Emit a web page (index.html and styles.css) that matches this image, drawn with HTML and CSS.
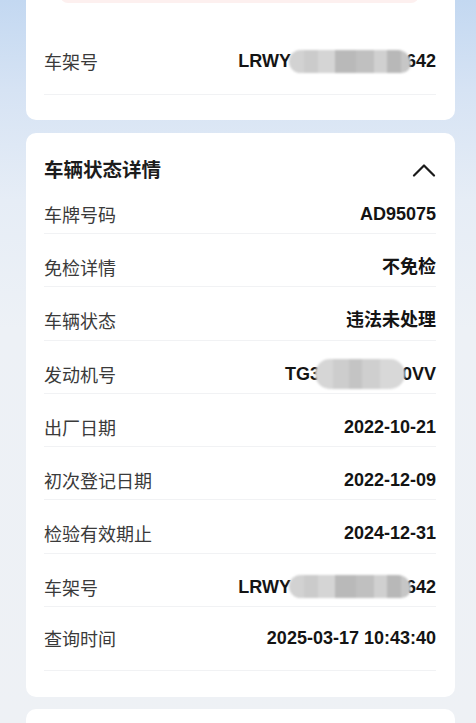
FILE: index.html
```html
<!DOCTYPE html>
<html lang="zh-CN">
<head>
<meta charset="utf-8">
<title>车辆状态详情</title>
<link rel="stylesheet" href="styles.css">
</head>
<body>
<div class="page">
  <section class="card card-top">
    <div class="alert"></div>
    <div class="row row-solo">
      <span class="label">车架号</span>
      <span class="value"><span>LRWY</span><span class="mask mask-vin"></span><span>642</span></span>
    </div>
  </section>

  <section class="card card-detail">
    <header class="card-head">
      <h2 class="title">车辆状态详情</h2>
      <svg class="chevron" width="24" height="14" viewBox="0 0 24 14" aria-hidden="true">
        <polyline points="2,12.5 12,2.5 22,12.5" fill="none" stroke="#1a1a1a" stroke-width="2.2" stroke-linecap="round" stroke-linejoin="round"/>
      </svg>
    </header>
    <div class="row row-first"><span class="label">车牌号码</span><span class="value">AD95075</span></div>
    <div class="row"><span class="label">免检详情</span><span class="value">不免检</span></div>
    <div class="row"><span class="label">车辆状态</span><span class="value">违法未处理</span></div>
    <div class="row"><span class="label">发动机号</span><span class="value"><span>TG3</span><span class="mask mask-engine"></span><span>0VV</span></span></div>
    <div class="row"><span class="label">出厂日期</span><span class="value">2022-10-21</span></div>
    <div class="row"><span class="label">初次登记日期</span><span class="value">2022-12-09</span></div>
    <div class="row"><span class="label">检验有效期止</span><span class="value">2024-12-31</span></div>
    <div class="row"><span class="label">车架号</span><span class="value"><span>LRWY</span><span class="mask mask-vin"></span><span>642</span></span></div>
    <div class="row row-last"><span class="label">查询时间</span><span class="value">2025-03-17 10:43:40</span></div>
  </section>

  <section class="card card-next"></section>
</div>
</body>
</html>
```

FILE: styles.css
```css
html, body {
  margin: 0;
  padding: 0;
}
body {
  height: 723px;
  overflow: hidden;
  font-family: "Noto Sans CJK SC", "Noto Sans", sans-serif;
  background:
    linear-gradient(180deg, #c3d8f1 0px, #d6e3f4 90px, #e6edf6 200px, #edf1f6 330px, #eef1f5 723px);
}
.page {
  padding: 0 21px 0 26px;
}
.card {
  background: #ffffff;
  border-radius: 10px;
  padding: 0 19px 0 18px;
}
.card-top {
  margin-top: -40px;
  padding-top: 13px;
  padding-bottom: 25px;
}
.alert {
  height: 30px;
  margin: 0 17px 0 16px;
  background: #fdf0ef;
  border-radius: 0 0 8px 8px;
}
.row {
  display: flex;
  justify-content: space-between;
  align-items: center;
  height: 22px;
  padding: 22px 0 8.3px;
  line-height: 22px;
  border-bottom: 1px solid #f1f2f4;
}
.row-solo {
  padding: 47px 0 22px;
}
.card-detail {
  margin-top: 13px;
  padding-bottom: 26px;
}
.card-head {
  display: flex;
  justify-content: space-between;
  align-items: center;
  padding-top: 24px;
}
.title {
  margin: 0;
  font-size: 19.5px;
  line-height: 24px;
  font-weight: 700;
  color: #1c1c1c;
}
.chevron {
  display: block;
  margin-top: 2px;
}
.row-first {
  padding-top: 22px;
  padding-bottom: 8px;
}
.row-last {
  padding: 20px 0 21px;
}
.label {
  font-size: 18px;
  color: #3a3a3a;
  font-weight: 400;
}
.value {
  display: flex;
  align-items: center;
  height: 22px;
  font-family: "Liberation Sans", "Noto Sans CJK SC", sans-serif;
  font-size: 18px;
  font-weight: 700;
  color: #141414;
}
.mask {
  position: relative;
  z-index: 1;
  display: block;
  flex: none;
  filter: blur(1.2px);
}
.mask-vin {
  width: 122px;
  height: 23px;
  margin: -1px -5px -1px -2px;
  border-radius: 12px 14px 10px 12px;
  background: linear-gradient(90deg,
    #d2d2d2 0 12%, #cbcbcb 12% 24%, #d5d5d5 24% 38%,
    #b9b9b9 38% 55%, #c0c0c0 55% 70%, #d0d0d0 70% 80%,
    #b8b8b8 80% 92%, #c6c6c6 92% 100%);
}
.mask-engine {
  width: 90px;
  height: 30px;
  margin: -4px -3px -4px -5px;
  border-radius: 15px;
  background: linear-gradient(90deg,
    #d6d6d6 0 20%, #cdcdcd 20% 38%, #c4c4c4 38% 52%,
    #cfcfcf 52% 72%, #d8d8d8 72% 100%);
}
.card-next {
  margin-top: 12px;
  height: 80px;
}
```
